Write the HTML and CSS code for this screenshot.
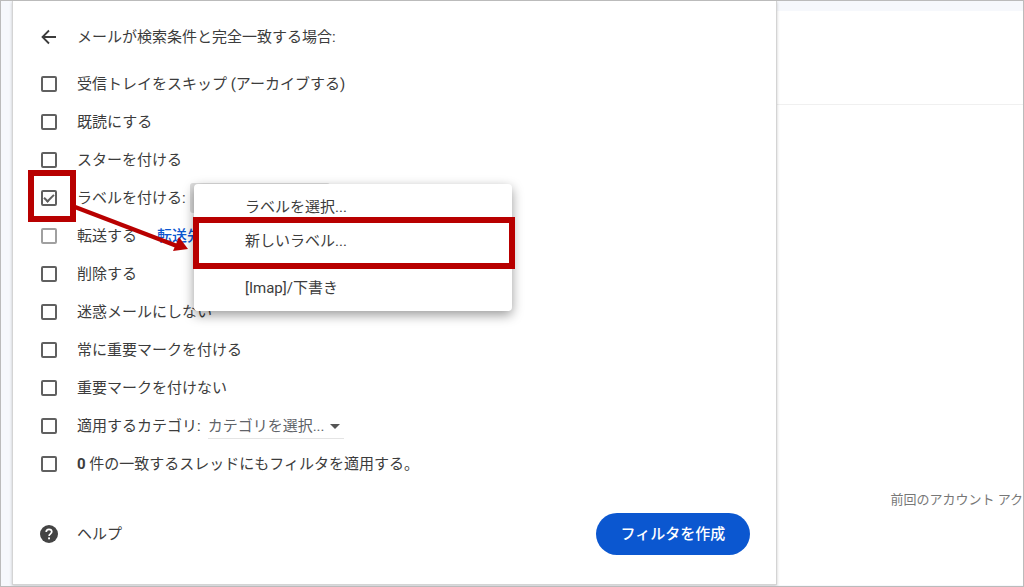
FILE: index.html
```html
<!DOCTYPE html>
<html lang="ja">
<head>
<meta charset="UTF-8">
<meta name="viewport" content="width=device-width, initial-scale=1.0">
<title>フィルタを作成</title>
<link rel="stylesheet" href="styles.css">
</head>
<body>
<div class="page">
    <form class="filter-panel">
        <div class="panel-header">
            <button type="button" class="btn-back" aria-label="戻る">
                <svg width="18" height="18" viewBox="0 0 18 18" fill="none" stroke="currentColor" stroke-width="1.8">
                    <path d="M16 9H3M9 2.5L2.5 9L9 15.5"/>
                </svg>
            </button>
            <span>メールが検索条件と完全一致する場合:</span>
        </div>
        <div class="options">
            <div class="option">
                <input type="checkbox" id="archive">
                <label for="archive">受信トレイをスキップ (アーカイブする)</label>
            </div>
            <div class="option">
                <input type="checkbox" id="read">
                <label for="read">既読にする</label>
            </div>
            <div class="option">
                <input type="checkbox" id="star">
                <label for="star">スターを付ける</label>
            </div>
            <div class="option option-label">
                <input type="checkbox" id="label" checked>
                <label for="label">ラベルを付ける:</label>
                <button type="button" class="label-select" aria-label="ラベルを選択" aria-haspopup="menu"></button>
                <div class="menu" role="menu">
                    <button type="button" class="menu-item" role="menuitem">ラベルを選択...</button>
                    <button type="button" class="menu-item menu-item-new" role="menuitem">新しいラベル...</button>
                    <button type="button" class="menu-item" role="menuitem">[Imap]/下書き</button>
                </div>
                <!-- red marks -->
                <div class="mark mark-check"></div>
                <div class="mark mark-item"></div>
                <svg class="mark-arrow" width="116" height="48" viewBox="0 0 116 48">
                    <path d="M2 4L104 43" stroke="#b80000" stroke-width="4.5"/>
                    <path d="M106 34L115 46L100 48Z" fill="#b80000"/>
                </svg>
            </div>
            <div class="option">
                <input type="checkbox" id="forward" disabled>
                <label for="forward">転送する</label>
                <a href="#" class="forward-link">転送先</a>
            </div>
            <div class="option">
                <input type="checkbox" id="delete">
                <label for="delete">削除する</label>
            </div>
            <div class="option">
                <input type="checkbox" id="spam">
                <label for="spam">迷惑メールにしない</label>
            </div>
            <div class="option">
                <input type="checkbox" id="important">
                <label for="important">常に重要マークを付ける</label>
            </div>
            <div class="option">
                <input type="checkbox" id="notImportant">
                <label for="notImportant">重要マークを付けない</label>
            </div>
            <div class="option">
                <input type="checkbox" id="category">
                <label for="category">適用するカテゴリ:</label>
                <div class="category">
                    <select class="category-select" aria-label="カテゴリ">
                        <option>カテゴリを選択...</option>
                    </select>
                </div>
            </div>
            <div class="option">
                <input type="checkbox" id="existing">
                <label for="existing"><b>0</b> 件の一致するスレッドにもフィルタを適用する。</label>
            </div>
        </div>
        <div class="panel-footer">
            <a href="#" class="help">
                <svg width="18" height="18" viewBox="0 0 18 18">
                    <circle cx="9" cy="9" r="9" fill="#444"/>
                    <path d="M6.2 7.1C6.2 5.4 7.4 4.3 9 4.3s2.8 1 2.8 2.5c0 1.9-2.7 2.1-2.7 4.1" fill="none" stroke="#fff" stroke-width="1.7"/>
                    <rect x="8.1" y="12.4" width="1.9" height="1.9" fill="#fff"/>
                </svg>
                <span>ヘルプ</span>
            </a>
            <button type="submit" class="btn-create">フィルタを作成</button>
        </div>
    </form>
    <div class="mail-list">
        <div class="mail-toolbar"></div>
        <p class="activity">前回のアカウント アク</p>
    </div>
</div>
</body>
</html>
```
FILE: styles.css
```css
body {
    margin: 0;
    font-family: Roboto, "Noto Sans CJK JP", sans-serif;
    font-size: 15px;
    line-height: 24px;
    color: #3c3c3c;
    background-color: #fff;
}
button,
select {
    font: inherit;
    color: inherit;
    border: none;
    background: none;
    padding: 0;
}
.page {
    display: flex;
    box-sizing: border-box;
    min-height: 100vh;
    padding: 0 0 1px 11px;
    border: 1px solid #bbb;
    background-color: #f6f8fc;
    overflow: hidden;
}
.filter-panel {
    position: relative;
    flex: none;
    box-sizing: border-box;
    width: 75.7%;
    padding: 18px 26px 28px 28px;
    border: 1px solid #d4d4d4;
    border-top: none;
    background-color: #fff;
    box-shadow: 0 1px 3px rgba(0, 0, 0, 0.2);
}
.panel-header {
    display: flex;
    align-items: center;
    gap: 19px;
    height: 36px;
    margin: 0 0 10px -1px;
}
.btn-back {
    width: 18px;
    height: 18px;
    cursor: pointer;
}
.btn-back svg,
.help svg {
    display: block;
}
.option {
    display: flex;
    align-items: center;
    height: 38px;
}
.option input {
    appearance: none;
    box-sizing: border-box;
    width: 16px;
    height: 16px;
    margin: 0 20px 0 0;
    border: 2px solid #606060;
    border-radius: 2px;
}
.option input:disabled {
    border-color: #a0a0a0;
}
.option input:checked::after {
    content: "";
    display: block;
    box-sizing: border-box;
    width: 10px;
    height: 6px;
    margin: 2px 0 0 1px;
    border-left: 2px solid #606060;
    border-bottom: 2px solid #606060;
    transform: rotate(-45deg);
}
.option-label {
    position: relative;
}
.label-select {
    width: 140px;
    height: 30px;
    margin-left: 4px;
    border-radius: 3px;
    background-color: #ddd;
}
.menu {
    position: absolute;
    z-index: 1;
    top: 5px;
    left: 153px;
    box-sizing: border-box;
    width: 318px;
    padding: 6px 0;
    border-radius: 4px;
    background-color: #fff;
    box-shadow: 0 4px 12px rgba(0, 0, 0, 0.4);
}
.menu-item {
    display: block;
    width: 100%;
    height: 34px;
    padding-left: 51px;
    text-align: left;
    cursor: pointer;
}
.menu-item-new {
    margin-bottom: 13px;
}
.mark {
    position: absolute;
    z-index: 2;
    box-sizing: border-box;
    height: 52px;
    border: 6px solid #b80000;
    pointer-events: none;
}
.mark-check {
    top: -9px;
    left: -13px;
    width: 48px;
}
.mark-item {
    top: 38px;
    left: 152px;
    width: 322px;
}
.mark-arrow {
    position: absolute;
    z-index: 2;
    top: 24px;
    left: 32px;
    pointer-events: none;
}
.forward-link {
    margin-left: 20px;
    font-weight: 500;
    color: #0b57d0;
    text-decoration: none;
}
.category {
    position: relative;
    margin-left: 7px;
}
.category::after {
    content: "";
    position: absolute;
    top: 10px;
    right: 4px;
    border: 5px solid transparent;
    border-top-color: #555;
    border-bottom: none;
    pointer-events: none;
}
.category-select {
    appearance: none;
    width: 136px;
    color: #5f6368;
    border-bottom: 1px solid #e4e4e4;
}
.panel-footer {
    display: flex;
    align-items: center;
    justify-content: space-between;
    margin: 30px 0 0 -1px;
}
.help {
    display: flex;
    align-items: center;
    gap: 19px;
    color: inherit;
    text-decoration: none;
}
.btn-create {
    height: 42px;
    padding: 0 25px;
    border-radius: 21px;
    font-weight: 500;
    color: #fff;
    background-color: #0b57d0;
    cursor: pointer;
}
.mail-list {
    display: flex;
    flex: 1;
    flex-direction: column;
    justify-content: space-between;
    min-width: 0;
    margin-top: 10px;
    background-color: #fff;
}
.mail-toolbar {
    height: 93px;
    border-bottom: 1px solid #f0f0f0;
}
.activity {
    margin: 0 0 73px;
    font-size: 13px;
    text-align: right;
    color: #777;
}
```
